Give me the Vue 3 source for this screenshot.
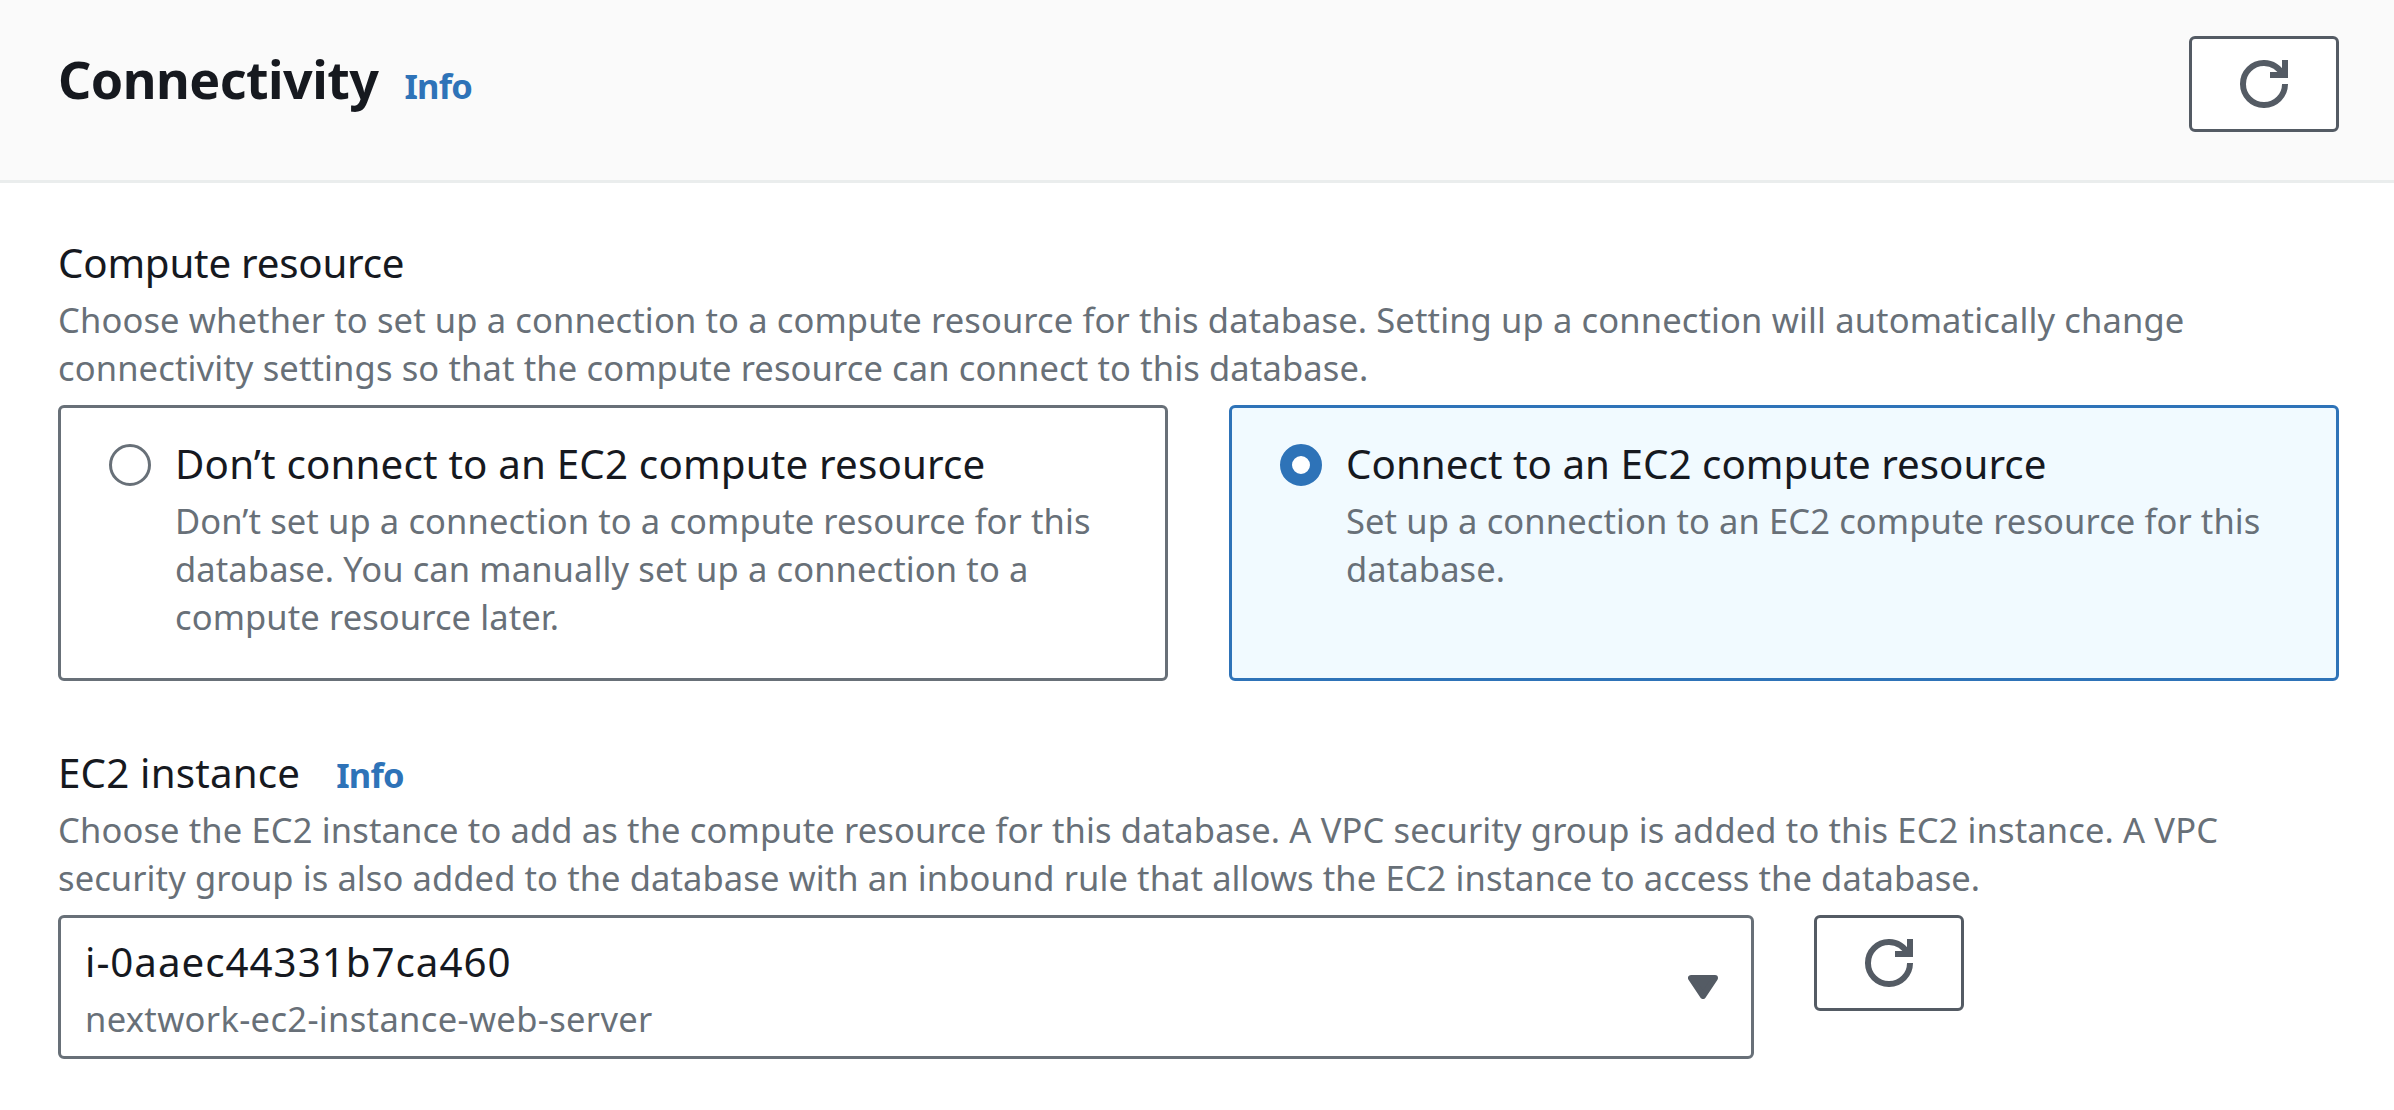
<script setup>
import { ref } from 'vue'

const choice = ref('connect')
const options = [
  {
    id: 'none',
    title: 'Don’t connect to an EC2 compute resource',
    lines: [
      'Don’t set up a connection to a compute resource for this',
      'database. You can manually set up a connection to a',
      'compute resource later.',
    ],
  },
  {
    id: 'connect',
    title: 'Connect to an EC2 compute resource',
    lines: ['Set up a connection to an EC2 compute resource for this', 'database.'],
  },
]
</script>

<template>
  <main class="panel">
    <header class="header">
      <div class="heading">
        <h2>Connectivity</h2>
        <a class="info">Info</a>
      </div>
      <button class="refresh" aria-label="Refresh">
        <svg viewBox="0 0 16 16">
          <path d="M10 5h5V0M15 8a6.957 6.957 0 0 1-7 7 6.957 6.957 0 0 1-7-7 6.957 6.957 0 0 1 7-7 6.87 6.87 0 0 1 6.3 4" />
        </svg>
      </button>
    </header>

    <section class="field">
      <div class="label compute">Compute resource</div>
      <div class="hint">
        Choose whether to set up a connection to a compute resource for this database. Setting up a connection will automatically change<br />
        connectivity settings so that the compute resource can connect to this database.
      </div>
      <div class="tiles">
        <div
          v-for="o in options"
          :key="o.id"
          class="tile"
          :class="{ selected: choice === o.id }"
          @click="choice = o.id"
        >
          <span class="radio"></span>
          <div class="tile-text">
            <div class="label">{{ o.title }}</div>
            <div v-for="line in o.lines" :key="line" class="hint">{{ line }}</div>
          </div>
        </div>
      </div>
    </section>

    <section class="field instance">
      <div class="label-row">
        <div class="label ec2">EC2 instance</div>
        <a class="info">Info</a>
      </div>
      <div class="hint">
        Choose the EC2 instance to add as the compute resource for this database. A VPC security group is added to this EC2 instance. A VPC<br />
        <span class="tight">security group is also added to the database with an inbound rule that allows the EC2 instance to access the database.</span>
      </div>
      <div class="select-row">
        <div class="select">
          <div class="select-text">
            <div class="label value">i-0aaec44331b7ca460</div>
            <div class="hint name">nextwork-ec2-instance-web-server</div>
          </div>
          <svg class="caret" viewBox="0 0 30 24">
            <path d="M3 3h24L15 21z" />
          </svg>
        </div>
        <button class="refresh" aria-label="Refresh">
          <svg viewBox="0 0 16 16">
            <path d="M10 5h5V0M15 8a6.957 6.957 0 0 1-7 7 6.957 6.957 0 0 1-7-7 6.957 6.957 0 0 1 7-7 6.87 6.87 0 0 1 6.3 4" />
          </svg>
        </button>
      </div>
    </section>
  </main>
</template>

<style>
body {
  background: #fff;
}
</style>

<style scoped>
.panel {
  box-sizing: border-box;
  width: 2394px;
  height: 1110px;
  overflow: hidden;
  background: #fff;
  color: #16191f;
  font-family: 'Noto Sans', 'Open Sans', sans-serif;
}
.header {
  box-sizing: border-box;
  height: 183px;
  padding: 36px 55px 0 58px;
  display: flex;
  justify-content: space-between;
  align-items: flex-start;
  background: #fafafa;
  border-bottom: 3px solid #eaeded;
}
.heading {
  display: flex;
  align-items: baseline;
  padding-top: 10px;
}
h2 {
  margin: 0 26px 0 0;
  font-size: 52px;
  line-height: 66px;
  font-weight: 700;
  letter-spacing: -0.55px;
}
.info {
  color: #2e73b8;
  font-size: 34.5px;
  line-height: 48px;
  font-weight: 700;
  letter-spacing: -0.8px;
}
.refresh {
  box-sizing: border-box;
  width: 150px;
  height: 96px;
  padding: 0;
  display: flex;
  align-items: center;
  justify-content: center;
  background: #fff;
  border: 3px solid #545b64;
  border-radius: 6px;
}
.refresh svg {
  width: 48px;
  height: 48px;
  fill: none;
  stroke: #545b64;
  stroke-width: 2;
}
.field {
  padding: 47px 55px 0 58px;
}
.label {
  font-size: 40.3px;
  line-height: 66px;
  letter-spacing: 0.17px;
  white-space: nowrap;
}
.compute {
  letter-spacing: -0.23px;
}
.hint {
  color: #687078;
  font-size: 34.5px;
  line-height: 48px;
  letter-spacing: 0.135px;
  white-space: nowrap;
}
.tiles {
  margin-top: 13px;
  display: flex;
  justify-content: space-between;
}
.tile {
  box-sizing: border-box;
  width: 1110px;
  height: 276px;
  padding: 23px 48px 0;
  display: flex;
  align-items: flex-start;
  border: 3px solid #687078;
  border-radius: 6px;
}
.tile.selected {
  background: #f1faff;
  border-color: #2e73b8;
}
.selected .label {
  letter-spacing: 0.03px;
}
.tile-text .hint {
  letter-spacing: 0.11px;
}
.radio {
  box-sizing: border-box;
  width: 42px;
  height: 42px;
  margin: 13px 24px 0 0;
  flex: none;
  background: #fff;
  border: 3px solid #687078;
  border-radius: 50%;
}
.selected .radio {
  border: 12px solid #2e73b8;
}
.instance {
  padding-top: 59px;
}
.label-row {
  display: flex;
  align-items: baseline;
  height: 66px;
}
.ec2 {
  margin: 0 36px 0 0;
}
.tight {
  letter-spacing: 0.1px;
}
.select-row {
  margin-top: 13px;
  display: flex;
  gap: 60px;
}
.select {
  box-sizing: border-box;
  width: 1696px;
  height: 144px;
  padding: 11px 33px 0 24px;
  display: flex;
  justify-content: space-between;
  border: 3px solid #687078;
  border-radius: 6px;
}
.value {
  letter-spacing: 0.98px;
}
.name {
  letter-spacing: 0.34px;
}
.caret {
  width: 30px;
  height: 24px;
  margin-top: 46px;
  fill: #545b64;
  stroke: #545b64;
  stroke-width: 6;
  stroke-linejoin: round;
}
</style>
